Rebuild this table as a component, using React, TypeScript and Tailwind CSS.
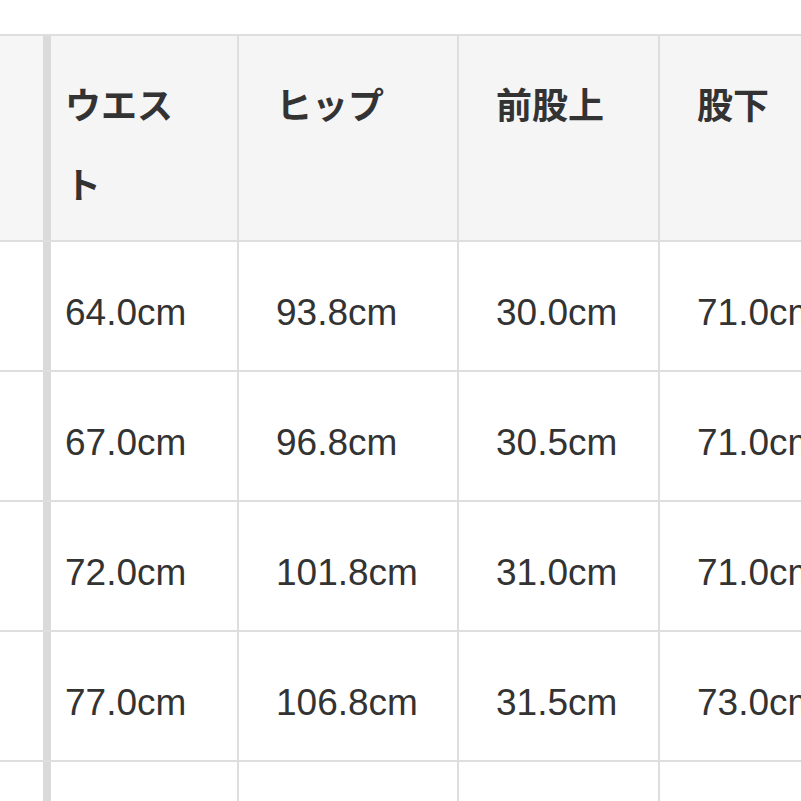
import React from "react";

const cjk = { fontFamily: '"Noto Sans CJK JP", "Noto Sans", sans-serif' };
const num = { fontFamily: '"Liberation Sans", Arial, sans-serif' };

const rows = [
  ["64.0cm", "93.8cm", "30.0cm", "71.0cm"],
  ["67.0cm", "96.8cm", "30.5cm", "71.0cm"],
  ["72.0cm", "101.8cm", "31.0cm", "71.0cm"],
  ["77.0cm", "106.8cm", "31.5cm", "73.0cm"],
];

const colW = ["w-[188px]", "w-[220px]", "w-[201px]", "w-[220px]"];
const colPl = ["pl-[14px]", "pl-[37px]", "pl-[37px]", "pl-[37px]"];

export default function App() {
  return (
    <div className="w-[801px] h-[801px] overflow-hidden bg-white pt-[34px] text-[#333333]">
      <div className="w-[1000px] border-t-2 border-[#dedede]">
        {/* header */}
        <div className="flex h-[206px] border-b-2 border-[#dedede] bg-[#f5f5f5]">
          <div className="w-[51px] shrink-0 border-r-[8px] border-[#dadada] bg-[#f6f6f6]" />
          {["ウエスト", "ヒップ", "前股上", "股下"].map((h, i) => (
            <div
              key={h}
              className={`${colW[i]} ${colPl[i]} shrink-0 border-r-2 border-[#dedede] pt-[27px]`}
            >
              <div
                style={cjk}
                className="w-[125px] text-[36px] font-bold leading-[80px] text-[#333333]"
              >
                {h}
              </div>
            </div>
          ))}
        </div>
        {rows.map((r, ri) => (
          <div key={ri} className="flex h-[130px] border-b-2 border-[#dedede] bg-white">
            <div className="w-[51px] shrink-0 border-r-[8px] border-[#dadada] bg-white" />
            {r.map((v, i) => (
              <div
                key={i}
                className={`${colW[i]} ${colPl[i]} shrink-0 border-r-2 border-[#dedede] flex items-center pt-[12px]`}
              >
                <span style={num} className="text-[37px] leading-[37px] text-[#333333]">
                  {v}
                </span>
              </div>
            ))}
          </div>
        ))}
        <div className="flex h-[41px] border-b border-[#c4c4c4] bg-white">
          <div className="w-[51px] shrink-0 border-r-[8px] border-[#dadada] bg-white" />
          {colW.map((w, i) => (
            <div key={i} className={`${w} shrink-0 border-r-2 border-[#dedede]`} />
          ))}
        </div>
      </div>
    </div>
  );
}
